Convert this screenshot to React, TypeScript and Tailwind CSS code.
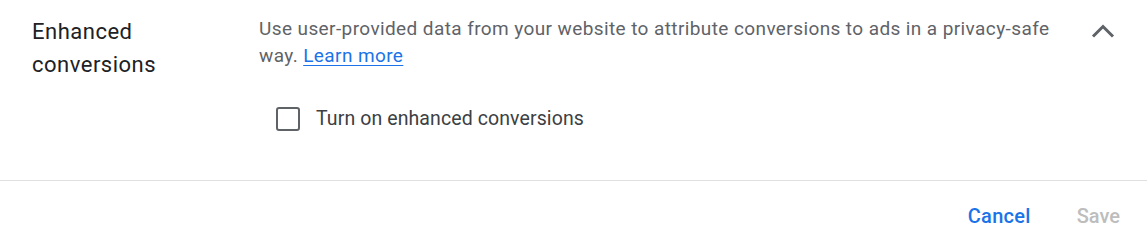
export default function App() {
  return (
    <div className="w-[1147px] h-[247px] bg-white font-['Roboto',sans-serif] overflow-hidden">
      {/* Setting row */}
      <div className="flex pt-[15px] pb-[49px]">
        <div className="w-[259px] shrink-0 pl-[32px] text-[22px] leading-[33px] text-[#202124] tracking-[0.5px]">
          Enhanced
          <br />
          conversions
        </div>
        <div className="flex-1">
          <p className="w-[800px] text-[19px] leading-[27px] text-[#5f6368] tracking-[0.4px]">
            Use user-provided data from your website to attribute conversions to ads in a privacy-safe way.{" "}
            <a href="#" className="text-[#1a73e8] underline underline-offset-[3px]">
              Learn more
            </a>
          </p>
          <label className="mt-[38px] ml-[17px] flex items-center gap-[16px]">
            <span className="w-[24px] h-[24px] rounded-[3px] border-[2.5px] border-[#5f6368]" />
            <span className="text-[19.5px] leading-[24px] text-[#3c4043] tracking-[0.1px]">
              Turn on enhanced conversions
            </span>
          </label>
        </div>
        <div className="w-[82px] shrink-0 flex justify-center pt-[9px] pr-[6px]">
          <svg width="24" height="14" viewBox="0 0 24 14" fill="none">
            <path d="M2 12.5 L12 2.5 L22 12.5" stroke="#5f6368" strokeWidth="3" />
          </svg>
        </div>
      </div>

      {/* Footer */}
      <div className="border-t border-[#e0e0e0] flex justify-end items-center gap-[22px] pr-[15px] pt-[4px] h-[67px]">
        <button className="px-[12px] text-[20px] font-medium text-[#1a73e8] tracking-[0.3px]">Cancel</button>
        <button className="px-[12px] text-[20px] font-medium text-[#bdbdbd]">Save</button>
      </div>
    </div>
  )
}
